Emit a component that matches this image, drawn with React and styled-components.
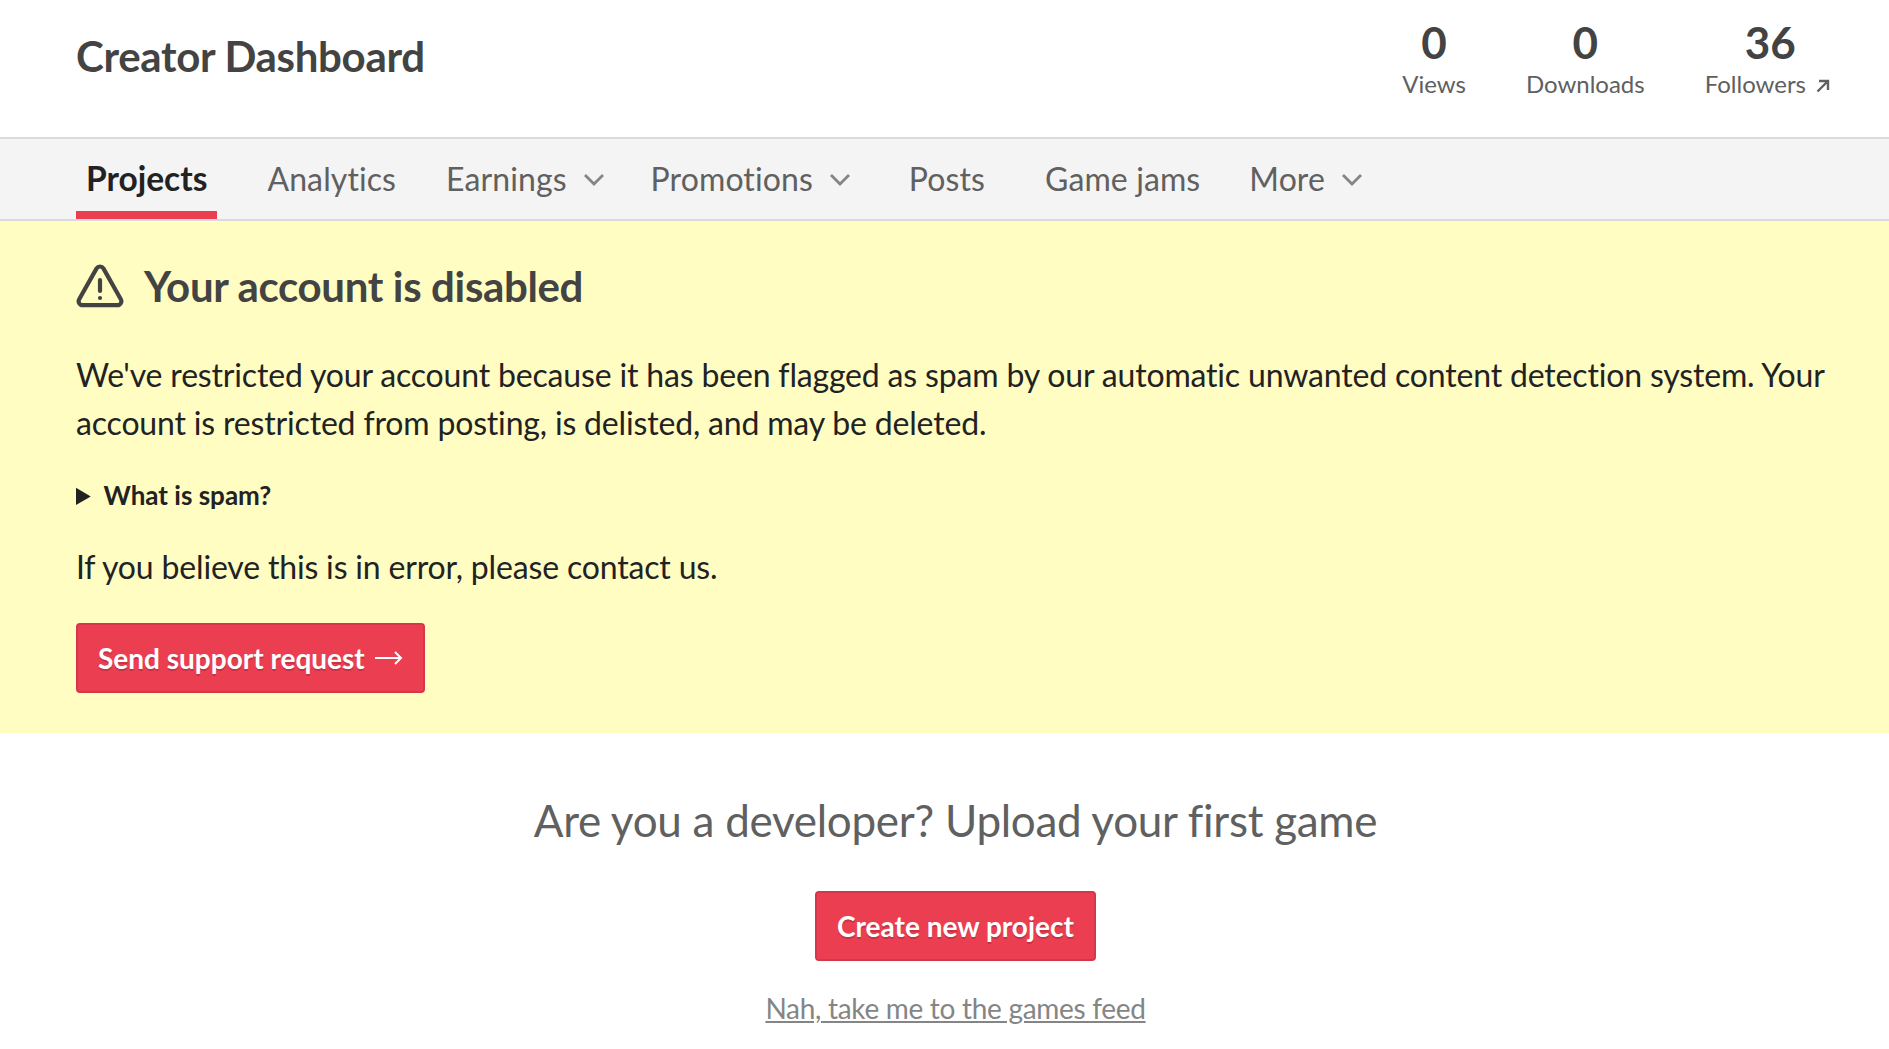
import styled, { createGlobalStyle } from "styled-components";

const GlobalStyle = createGlobalStyle`
    html, body {
        margin: 0;
        padding: 0;
        background: #fff;
    }

    body {
        font-family: 'Lato', 'Liberation Sans', sans-serif;
        color: #222;
    }
`;

const Header = styled.header`
    height: 137px;
    padding: 0 59px 0 76px;
    display: flex;
    align-items: center;
    justify-content: space-between;
`;

const Title = styled.h2`
    margin: 0 0 26px;
    font-size: 42px;
    font-weight: 700;
    letter-spacing: -0.3px;
    color: #434343;
`;

const Stats = styled.div`
    display: flex;
    gap: 60px;
    margin-bottom: 20px;
`;

const Stat = styled.div`
    text-align: center;
`;

const StatNumber = styled.div`
    font-size: 44px;
    font-weight: 700;
    line-height: 50px;
    padding-left: ${(props) => props.$shift || 0}px;
    color: #434343;
`;

const StatLabel = styled.div`
    font-size: 24px;
    line-height: 34px;
    color: #606060;
    display: flex;
    align-items: center;
    justify-content: center;
    gap: 10px;
`;

const ExternalArrow = styled.svg`
    width: 14px;
    height: 14px;
    margin-top: 4px;
    fill: none;
    stroke: #606060;
    stroke-width: 2.4;
`;

const Nav = styled.nav`
    height: 80px;
    padding: 0 76px;
    display: flex;
    background: #f4f4f4;
    border-top: 2px solid #dadada;
    border-bottom: 2px solid #dadada;
`;

const Tab = styled.a`
    display: flex;
    align-items: center;
    gap: 16px;
    height: 80px;
    box-sizing: border-box;
    padding: 6px 10px 0;
    margin-left: ${(props) => props.$offset || 0}px;
    font-size: ${(props) => (props.$active ? 33.5 : 32)}px;
    font-weight: ${(props) => (props.$active ? 700 : 400)};
    letter-spacing: ${(props) => (props.$active ? 0 : 0.1)}px;
    color: ${(props) => (props.$active ? "#222" : "#606060")};
    border-bottom: 8px solid ${(props) => (props.$active ? "#ec3e51" : "transparent")};
    white-space: nowrap;
`;

const Chevron = styled.svg`
    width: 22px;
    height: 14px;
    margin-top: 4px;
    fill: none;
    stroke: #858585;
    stroke-width: 2.8;
`;

const Notice = styled.section`
    background: #fffdc2;
    height: 512px;
    padding: 0 40px 0 76px;
    box-sizing: border-box;
    display: flex;
    flex-direction: column;
    align-items: flex-start;
`;

const NoticeTitle = styled.h2`
    margin: 35px 0 0;
    height: 60px;
    display: flex;
    align-items: center;
    gap: 20px;
    font-size: 42px;
    font-weight: 700;
    letter-spacing: -0.35px;
    color: #434343;
`;

const NoticeText = styled.p`
    margin: ${(props) => props.$top}px 0 0;
    font-size: 32px;
    line-height: 48px;
    letter-spacing: -0.17px;
    color: #222;
`;

const Details = styled.details`
    margin-top: 28px;
`;

const Summary = styled.summary`
    font-size: 26px;
    line-height: 40px;
    font-weight: 700;
    color: #222;
`;

const Button = styled.a`
    display: inline-flex;
    align-items: center;
    gap: 10px;
    height: 70px;
    padding: 0 20px;
    box-sizing: border-box;
    font-size: 28px;
    font-weight: 700;
    color: #fff;
    background: #ec3e51;
    border: 2px solid #d63649;
    border-radius: 4px;
    text-shadow: 0 2px 0 #c93144;
    margin-top: ${(props) => props.$top}px;
`;

const Empty = styled.section`
    display: flex;
    flex-direction: column;
    align-items: center;
    padding-left: 22px;
`;

const EmptyTitle = styled.h2`
    margin: 59px 0 0;
    font-size: 44px;
    line-height: 56px;
    font-weight: 400;
    letter-spacing: -0.28px;
    color: #606060;
`;

const FeedLink = styled.a`
    margin-top: 27px;
    font-size: 28px;
    line-height: 40px;
    letter-spacing: -0.3px;
    color: #858585;
    text-decoration: underline;
`;

const ChevronIcon = () => (
    <Chevron viewBox="0 0 22 14">
        <polyline points="2,2 11,11 20,2" />
    </Chevron>
);

const App = () => {
    return (
        <>
            <GlobalStyle />
            <Header>
                <Title>Creator Dashboard</Title>
                <Stats>
                    <Stat>
                        <StatNumber>0</StatNumber>
                        <StatLabel>Views</StatLabel>
                    </Stat>
                    <Stat>
                        <StatNumber>0</StatNumber>
                        <StatLabel>Downloads</StatLabel>
                    </Stat>
                    <Stat>
                        <StatNumber $shift={6}>36</StatNumber>
                        <StatLabel>
                            Followers
                            <ExternalArrow viewBox="0 0 14 14">
                                <path d="M1.5 12.5 L12 2 M3 2 H12 V11" />
                            </ExternalArrow>
                        </StatLabel>
                    </Stat>
                </Stats>
            </Header>
            <Nav>
                <Tab $active>Projects</Tab>
                <Tab $offset={40}>Analytics</Tab>
                <Tab $offset={30}>Earnings <ChevronIcon /></Tab>
                <Tab $offset={26}>Promotions <ChevronIcon /></Tab>
                <Tab $offset={38}>Posts</Tab>
                <Tab $offset={40}>Game jams</Tab>
                <Tab $offset={29}>More <ChevronIcon /></Tab>
            </Nav>
            <Notice>
                <NoticeTitle>
                    <svg width="48" height="44" viewBox="0 0 24 22" fill="none" stroke="#434343" strokeWidth="2.1" strokeLinecap="round" strokeLinejoin="round">
                        <path d="M10.3 2.2 1.6 17.6a2 2 0 0 0 1.7 3h17.4a2 2 0 0 0 1.7-3L13.7 2.2a2 2 0 0 0-3.4 0z" />
                        <path d="M12 8v5.5" />
                        <path d="M12 17h.01" />
                    </svg>
                    Your account is disabled
                </NoticeTitle>
                <NoticeText $top={35}>
                    We've restricted your account because it has been flagged as spam by our automatic unwanted content detection system. Your account is restricted from posting, is delisted, and may be deleted.
                </NoticeText>
                <Details>
                    <Summary>What is spam?</Summary>
                </Details>
                <NoticeText $top={28}>If you believe this is in error, please contact us.</NoticeText>
                <Button $top={32}>
                    Send support request
                    <svg width="28" height="16" viewBox="0 0 28 16" fill="none" stroke="#fff" strokeWidth="2">
                        <path d="M0 8 H26 M20 2 L26 8 L20 14" />
                    </svg>
                </Button>
            </Notice>
            <Empty>
                <EmptyTitle>Are you a developer? Upload your first game</EmptyTitle>
                <Button $top={43}>Create new project</Button>
                <FeedLink>Nah, take me to the games feed</FeedLink>
            </Empty>
        </>
    );
};

export default App;
